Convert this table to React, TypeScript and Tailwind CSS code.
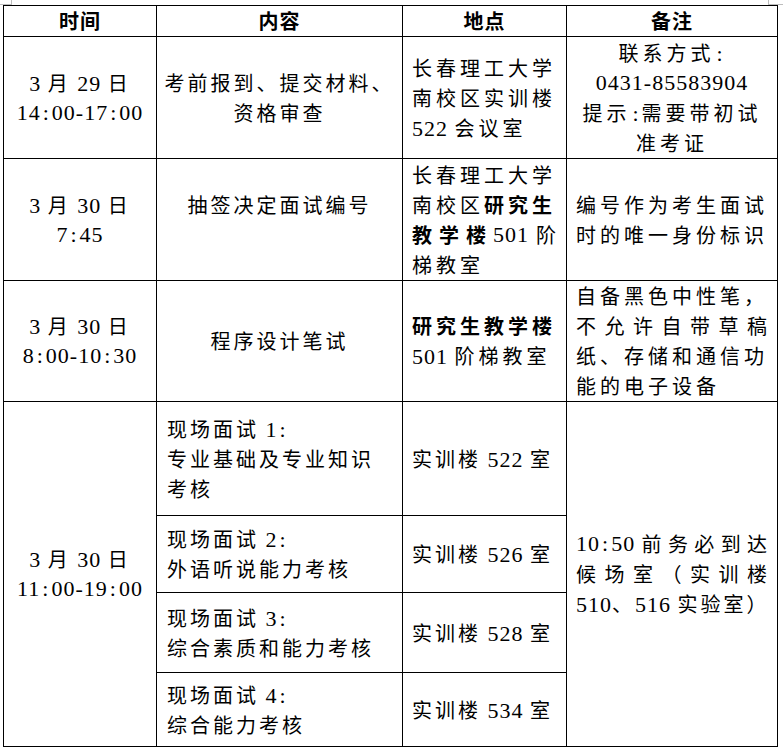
import React from "react";

const CJK = "font-['Noto_Sans_CJK_SC',sans-serif] text-[20px]";
const LAT = "font-['Liberation_Serif','Noto_Sans_CJK_SC',serif] text-[22px] tracking-[1px]";

type Tr = "t3" | "t4";
const trackCls: Record<Tr, string> = {
  t3: "tracking-[3px]",
  t4: "tracking-[4px]",
};

function Ascii({ s }: { s: string }) {
  const bits = s.split(/(:)/).filter((p) => p.length > 0);
  return (
    <span className={LAT}>
      {bits.map((b, i) =>
        b === ":" ? (
          <span key={i} className="px-[2px]">
            :
          </span>
        ) : (
          <React.Fragment key={i}>{b}</React.Fragment>
        )
      )}
    </span>
  );
}

function Txt({ s, bold, tr = "t3" }: { s: string; bold?: boolean; tr?: Tr }) {
  const parts = s.split(/([\x20-\x7E]+)/).filter((p) => p.length > 0);
  return (
    <>
      {parts.map((p, i) =>
        /^[\x20-\x7E]+$/.test(p) ? (
          <Ascii key={i} s={p} />
        ) : (
          <span key={i} className={`${CJK} ${trackCls[tr]} ${bold ? "font-bold" : ""}`}>
            {p}
          </span>
        )
      )}
    </>
  );
}

type Seg = { s: string; b?: boolean };

function Line({ segs, tr }: { segs: (string | Seg)[]; tr?: Tr }) {
  return (
    <div className="h-[30px] leading-[30px] whitespace-nowrap text-black">
      {segs.map((sg, i) =>
        typeof sg === "string" ? (
          <Txt key={i} s={sg} tr={tr} />
        ) : (
          <Txt key={i} s={sg.s} bold={sg.b} tr={tr} />
        )
      )}
    </div>
  );
}

function Spread({ toks }: { toks: (string | Seg)[] }) {
  return (
    <div className="h-[30px] leading-[30px] whitespace-nowrap text-black flex justify-between w-full">
      {toks.map((t, i) => {
        const sg = typeof t === "string" ? { s: t } : t;
        const isLat = /^[\x20-\x7E]+$/.test(sg.s);
        return isLat ? (
          <Ascii key={i} s={sg.s} />
        ) : (
          <span key={i} className={`${CJK} ${sg.b ? "font-bold" : ""}`}>
            {sg.s}
          </span>
        );
      })}
    </div>
  );
}

function Head({ s }: { s: string }) {
  return (
    <div className="bg-white flex items-center justify-center">
      <span className={`${CJK} font-bold tracking-[1px] text-black leading-[30px]`}>{s}</span>
    </div>
  );
}

function CCell({ lines, tr }: { lines: string[]; tr?: Tr }) {
  return (
    <div className="bg-white flex flex-col items-center justify-center">
      {lines.map((l, i) => (
        <Line key={i} segs={[l]} tr={tr} />
      ))}
    </div>
  );
}

function LCell({ children, extra = "" }: { children: React.ReactNode; extra?: string }) {
  return (
    <div className={`bg-white flex flex-col items-start justify-center pl-[9px] pr-[10px] ${extra}`}>
      {children}
    </div>
  );
}

export default function App() {
  return (
    <div className="relative w-[783px] h-[753px] bg-white overflow-hidden">
      {/* page corner marks */}
      <div className="absolute left-0 top-0 w-[12px] h-[5px] border-r border-b border-[#bdbdbd]" />
      <div className="absolute left-[768px] top-0 w-[15px] h-[5px] border-l border-b border-[#bdbdbd]" />

      <div className="pt-[5px] pl-[3px]">
        <div className="grid w-[775px] grid-cols-[152px_245px_163px_210px] grid-rows-[30px_121px_121px_120px_113px_76px_79px_73px] gap-px bg-black p-px">
          {/* header */}
          <Head s="时间" />
          <Head s="内容" />
          <Head s="地点" />
          <Head s="备注" />

          {/* row 1 */}
          <CCell lines={["3 月 29 日", "14:00-17:00"]} />
          <CCell lines={["考前报到、提交材料、", "资格审查"]} tr="t3" />
          <LCell>
            <Line segs={["长春理工大学"]} tr="t4" />
            <Line segs={["南校区实训楼"]} tr="t4" />
            <Line segs={["522 会议室"]} tr="t4" />
          </LCell>
          <CCell lines={["联系方式:", "0431-85583904", "提示:需要带初试", "准考证"]} tr="t4" />

          {/* row 2 */}
          <CCell lines={["3 月 30 日", "7:45"]} />
          <div className="bg-white flex flex-col items-center justify-center">
            <Line segs={["抽签决定面试编号"]} tr="t3" />
            <div className="h-[30px]" />
          </div>
          <LCell>
            <Line segs={["长春理工大学"]} tr="t4" />
            <Line segs={["南校区", { s: "研究生", b: true }]} tr="t4" />
            <Spread toks={[{ s: "教", b: true }, { s: "学", b: true }, { s: "楼", b: true }, "501", "阶"]} />
            <Line segs={["梯教室"]} tr="t4" />
          </LCell>
          <LCell>
            <Line segs={["编号作为考生面试"]} tr="t4" />
            <Line segs={["时的唯一身份标识"]} tr="t4" />
          </LCell>

          {/* row 3 */}
          <CCell lines={["3 月 30 日", "8:00-10:30"]} />
          <CCell lines={["程序设计笔试"]} tr="t3" />
          <LCell>
            <Line segs={[{ s: "研究生教学楼", b: true }]} tr="t4" />
            <Line segs={["501 阶梯教室"]} tr="t4" />
          </LCell>
          <LCell>
            <Line segs={["自备黑色中性笔，"]} tr="t4" />
            <Spread toks={["不", "允", "许", "自", "带", "草", "稿"]} />
            <Line segs={["纸、存储和通信功"]} tr="t4" />
            <Line segs={["能的电子设备"]} tr="t4" />
          </LCell>

          {/* row 4 */}
          <div className="row-span-4 bg-white flex flex-col items-center justify-center">
            <Line segs={["3 月 30 日"]} />
            <Line segs={["11:00-19:00"]} />
          </div>
          <LCell extra="pl-[10px]">
            <Line segs={["现场面试 1:"]} tr="t3" />
            <Line segs={["专业基础及专业知识"]} tr="t3" />
            <Line segs={["考核"]} tr="t3" />
          </LCell>
          <LCell>
            <Line segs={["实训楼 522 室"]} tr="t3" />
          </LCell>
          <div className="row-span-4 bg-white flex flex-col items-start justify-center pl-[9px] pr-[10px]">
            <Spread toks={["10:50", "前", "务", "必", "到", "达"]} />
            <Spread toks={["候", "场", "室", "（", "实", "训", "楼"]} />
            <Line segs={["510、516 实验室）"]} tr="t3" />
          </div>

          <LCell extra="pl-[10px]">
            <Line segs={["现场面试 2:"]} tr="t3" />
            <Line segs={["外语听说能力考核"]} tr="t3" />
          </LCell>
          <LCell>
            <Line segs={["实训楼 526 室"]} tr="t3" />
          </LCell>

          <LCell extra="pl-[10px]">
            <Line segs={["现场面试 3:"]} tr="t3" />
            <Line segs={["综合素质和能力考核"]} tr="t3" />
          </LCell>
          <LCell>
            <Line segs={["实训楼 528 室"]} tr="t3" />
          </LCell>

          <LCell extra="pl-[10px]">
            <Line segs={["现场面试 4:"]} tr="t3" />
            <Line segs={["综合能力考核"]} tr="t3" />
          </LCell>
          <LCell>
            <Line segs={["实训楼 534 室"]} tr="t3" />
          </LCell>
        </div>
      </div>
    </div>
  );
}
